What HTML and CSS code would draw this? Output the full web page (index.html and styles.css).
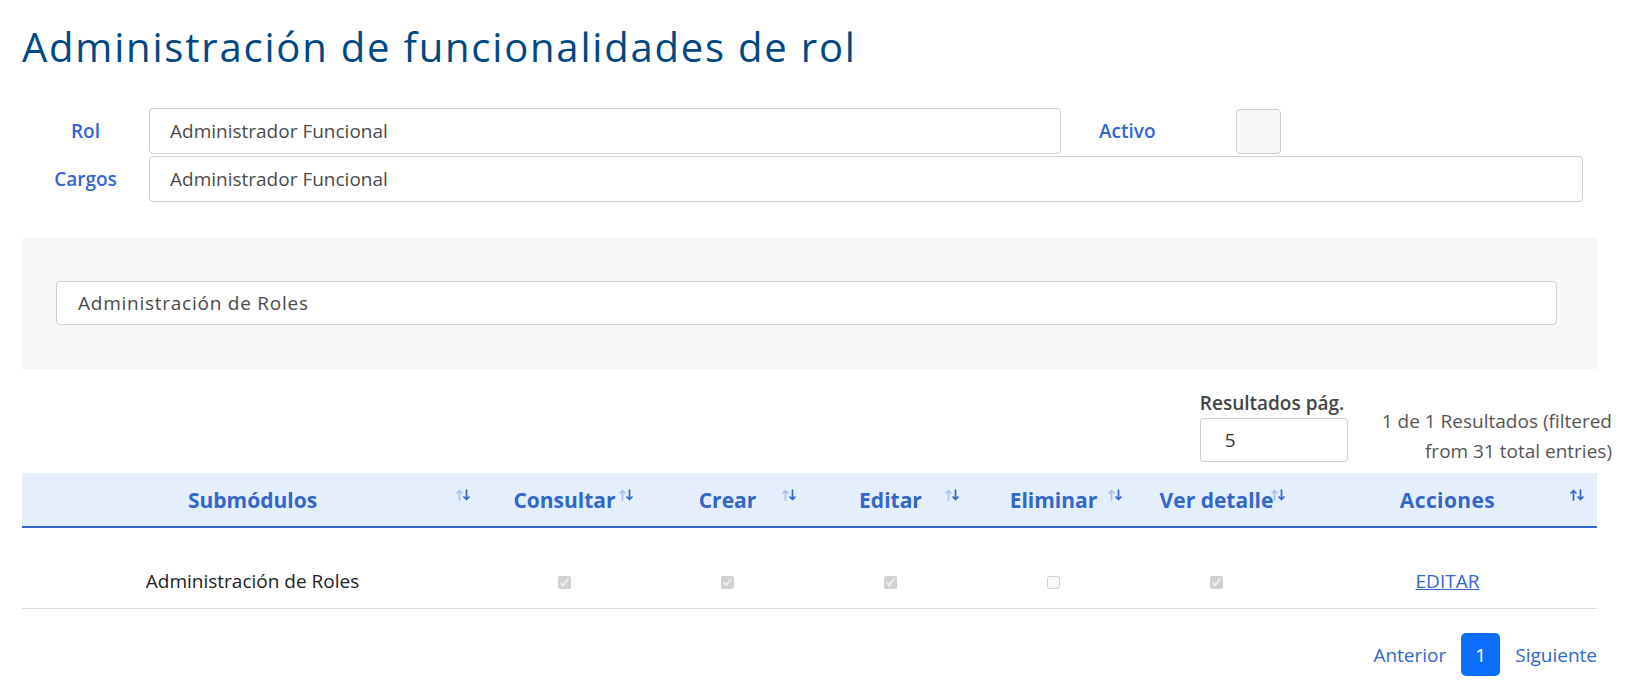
FILE: index.html
```html
<!DOCTYPE html>
<html lang="es">
<head>
<meta charset="utf-8">
<title>Administración de funcionalidades de rol</title>
<link rel="stylesheet" href="styles.css">
</head>
<body>
<div class="page">
  <h1 class="title">Administración de funcionalidades de rol</h1>

  <div class="form">
    <div class="form-row">
      <label class="lbl">Rol</label>
      <div class="input input-rol">Administrador Funcional</div>
      <label class="lbl lbl-activo">Activo</label>
      <span class="big-check"></span>
    </div>
    <div class="form-row">
      <label class="lbl">Cargos</label>
      <div class="input input-cargos">Administrador Funcional</div>
    </div>
  </div>

  <div class="panel">
    <div class="input panel-input">Administración de Roles</div>
  </div>

  <div class="controls">
    <div class="per-page">
      <div class="per-page-label">Resultados pág.</div>
      <div class="input per-page-input">5</div>
    </div>
    <div class="info">1 de 1 Resultados (filtered<br>from 31 total entries)</div>
  </div>

  <table class="grid">
    <colgroup>
      <col class="c-sub"><col class="c-chk"><col class="c-chk"><col class="c-chk"><col class="c-chk"><col class="c-chk"><col class="c-acc">
    </colgroup>
    <thead>
      <tr>
        <th>Submódulos<svg class="sort" viewBox="0 0 14 12"><path class="up" d="M3.5 11V1.5M1 4L3.5 1.5L6 4"/><path class="dn" d="M10.5 1V10.5M8 8L10.5 10.5L13 8"/></svg></th>
        <th>Consultar<svg class="sort" viewBox="0 0 14 12"><path class="up" d="M3.5 11V1.5M1 4L3.5 1.5L6 4"/><path class="dn" d="M10.5 1V10.5M8 8L10.5 10.5L13 8"/></svg></th>
        <th>Crear<svg class="sort" viewBox="0 0 14 12"><path class="up" d="M3.5 11V1.5M1 4L3.5 1.5L6 4"/><path class="dn" d="M10.5 1V10.5M8 8L10.5 10.5L13 8"/></svg></th>
        <th>Editar<svg class="sort" viewBox="0 0 14 12"><path class="up" d="M3.5 11V1.5M1 4L3.5 1.5L6 4"/><path class="dn" d="M10.5 1V10.5M8 8L10.5 10.5L13 8"/></svg></th>
        <th>Eliminar<svg class="sort" viewBox="0 0 14 12"><path class="up" d="M3.5 11V1.5M1 4L3.5 1.5L6 4"/><path class="dn" d="M10.5 1V10.5M8 8L10.5 10.5L13 8"/></svg></th>
        <th>Ver detalle<svg class="sort" viewBox="0 0 14 12"><path class="up" d="M3.5 11V1.5M1 4L3.5 1.5L6 4"/><path class="dn" d="M10.5 1V10.5M8 8L10.5 10.5L13 8"/></svg></th>
        <th class="th-acc">Acciones<svg class="sort sort-dark" viewBox="0 0 14 12"><path class="up" d="M3.5 11V1.5M1 4L3.5 1.5L6 4"/><path class="dn" d="M10.5 1V10.5M8 8L10.5 10.5L13 8"/></svg></th>
      </tr>
    </thead>
    <tbody>
      <tr>
        <td>Administración de Roles</td>
        <td><input type="checkbox" checked disabled></td>
        <td><input type="checkbox" checked disabled></td>
        <td><input type="checkbox" checked disabled></td>
        <td><input type="checkbox" disabled></td>
        <td><input type="checkbox" checked disabled></td>
        <td><a class="link" href="#">EDITAR</a></td>
      </tr>
    </tbody>
  </table>

  <div class="pager">
    <a class="pg-link" href="#">Anterior</a>
    <span class="pg-current">1</span>
    <a class="pg-link" href="#">Siguiente</a>
  </div>
</div>
</body>
</html>
```
FILE: styles.css
```css
* { box-sizing: border-box; }
html, body { margin: 0; padding: 0; background: #fff; }
body { font-family: "Open Sans", "Noto Sans", sans-serif; color: #222; }

.page { width: 1575px; margin-left: 22px; }

.title {
  margin: 23px 0 0 0;
  font-family: "Open Sans", sans-serif;
  font-weight: 400;
  font-size: 40px;
  line-height: 48px;
  letter-spacing: 1.8px;
  color: #004884;
}

.form { margin-top: 37px; display: flex; flex-direction: column; gap: 2px; }
.form-row { display: flex; align-items: center; height: 46px; }
.lbl {
  width: 127px;
  text-align: center;
  color: #3366cc;
  font-weight: 600;
  font-size: 19px;
}
.input {
  border: 1px solid #cfcfcf;
  border-radius: 4px;
  background: #fff;
  color: #4a4a4a;
  font-size: 19px;
  display: flex;
  align-items: center;
  padding-left: 20px;
}
.input-rol { width: 912px; height: 46px; }
.input-cargos { width: 1434px; height: 46px; }
.lbl-activo { width: 175px; text-align: left; padding-left: 38px; }
.big-check {
  width: 45px; height: 45px;
  border: 1px solid #cfcfcf;
  border-radius: 4px;
  background: #f6f6f6;
}

.panel {
  margin-top: 36px;
  background: #f5f6f8;
  padding: 43px 40px 44px 34px;
}
.panel-input { height: 44px; padding-left: 21px; letter-spacing: 0.75px; }

.controls {
  display: flex;
  justify-content: flex-end;
  margin-right: -15px;
  margin-top: 22px;
  height: 82px;
}
.per-page { width: 148px; }
.per-page-label { font-size: 19px; font-weight: 600; color: #444; line-height: 24px; white-space: nowrap; }
.per-page-input { margin-top: 3px; height: 44px; padding-left: 24px; color: #333; }
.info {
  margin-left: 34px;
  margin-top: 15px;
  text-align: right;
  font-size: 19px;
  line-height: 30px;
  color: #555;
}

.grid { width: 1575px; border-collapse: collapse; table-layout: fixed; }
.c-sub { width: 461px; }
.c-chk { width: 163px; }
.c-acc { width: 299px; }
.grid th {
  position: relative;
  height: 54px;
  background: #e4eefc;
  border-bottom: 2px solid #3366cc;
  color: #3366cc;
  font-weight: 700;
  font-size: 21px;
  text-align: center;
  padding: 0;
}
.grid th.th-acc { font-size: 21px; letter-spacing: 0.4px; }
.sort {
  position: absolute;
  right: 13px;
  top: 16px;
  width: 14px;
  height: 12px;
  fill: none;
  stroke-width: 1.7;
  stroke-linecap: round;
  stroke-linejoin: round;
}
.sort .up { stroke: #a9c1ee; }
.sort .dn { stroke: #3366cc; }
.sort-dark .up { stroke: #3366cc; }
.grid td {
  text-align: center;
  padding: 40px 0 14px 0;
  border-bottom: 1px solid #dedede;
  font-size: 19px;
  color: #222;
  height: 81px;
}
.grid td input { margin: 0; width: 13px; height: 13px; vertical-align: middle; }
.link { color: #3366cc; text-decoration: underline; }

.pager {
  display: flex;
  justify-content: flex-end;
  align-items: center;
  gap: 15px;
  margin-top: 24px;
}
.pg-link { color: #3366cc; text-decoration: none; font-size: 19px; }
.pg-current {
  width: 39px; height: 43px;
  border-radius: 5px;
  background: #0d6efd;
  color: #fff;
  font-size: 19px;
  display: flex; align-items: center; justify-content: center;
}
```
